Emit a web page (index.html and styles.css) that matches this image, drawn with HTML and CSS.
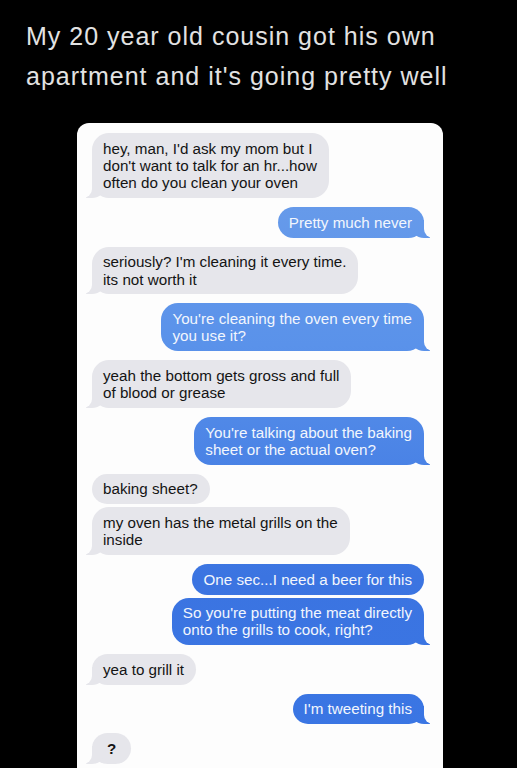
FILE: index.html
```html
<!DOCTYPE html>
<html lang="en">
<head>
    <meta charset="UTF-8">
    <meta name="viewport" content="width=device-width, initial-scale=1.0">
    <title>Oven</title>
    <link rel="stylesheet" href="styles.css">
</head>
<body>
    <h1 class="post_title">My 20 year old cousin got his own<br>apartment and it's going pretty well</h1>

    <div class="chat">
        <div class="msg got tail">hey, man, I'd ask my mom but I<br>don't want to talk for an hr...how<br>often do you clean your oven</div>
        <div class="msg sent tail">Pretty much never</div>
        <div class="msg got tail">seriously? I'm cleaning it every time.<br>its not worth it</div>
        <div class="msg sent tail">You're cleaning the oven every time<br>you use it?</div>
        <div class="msg got tail">yeah the bottom gets gross and full<br>of blood or grease</div>
        <div class="msg sent tail">You're talking about the baking<br>sheet or the actual oven?</div>
        <div class="msg got">baking sheet?</div>
        <div class="msg got tail next">my oven has the metal grills on the<br>inside</div>
        <div class="msg sent">One sec...I need a beer for this</div>
        <div class="msg sent tail next">So you're putting the meat directly<br>onto the grills to cook, right?</div>
        <div class="msg got tail">yea to grill it</div>
        <div class="msg sent tail">I'm tweeting this</div>
        <div class="msg got tail short">?</div>
    </div>
</body>
</html>
```

FILE: styles.css
```css
body {
    margin: 0;
    background: #000;
    font-family: "Liberation Sans", Arial, sans-serif;
}
.post_title {
    margin: 0;
    padding: 16px 0 0 26px;
    color: #e2e2e2;
    font-size: 25px;
    font-weight: normal;
    letter-spacing: 1px;
    line-height: 40px;
}
.chat {
    margin: 27px 0 0 77px;
    width: 366px;
    box-sizing: border-box;
    padding: 10px 19px 6px 15px;
    background: #fdfdfd;
    border-radius: 12px 12px 0 0;
    display: flex;
    flex-direction: column;
}
.msg {
    position: relative;
    z-index: 0;
    margin-top: 9px;
    padding: 6.5px 12px 6.5px 11px;
    border-radius: 17px;
    font-size: 15.2px;
    line-height: 17.4px;
    white-space: nowrap;
}
.msg:first-child {
    margin-top: 0;
}
.msg.next {
    margin-top: 3px;
}
.msg.short {
    padding-left: 15px;
    padding-right: 15px;
    font-weight: bold;
}
.got {
    align-self: flex-start;
    background: #e6e6eb;
    color: #141414;
}
.sent {
    align-self: flex-end;
    background: linear-gradient(to bottom, #78a6ea 0%, #5a92ea 45%, #3b74e1 75%, #3a76e4 100%) fixed;
    color: #f2f6fd;
}

/* bubble tails */
.tail::before,
.tail::after {
    content: "";
    position: absolute;
    bottom: 0;
    height: 18px;
    z-index: -1;
}
.got.tail::before {
    left: -6px;
    width: 20px;
    background: #e6e6eb;
    border-bottom-right-radius: 14px;
}
.got.tail::after {
    left: -10px;
    width: 10px;
    background: #fdfdfd;
    border-bottom-right-radius: 9px;
}
.sent.tail::before {
    right: -6px;
    width: 20px;
    background: inherit;
    border-bottom-left-radius: 14px;
}
.sent.tail::after {
    right: -10px;
    width: 10px;
    background: #fdfdfd;
    border-bottom-left-radius: 9px;
}
```
